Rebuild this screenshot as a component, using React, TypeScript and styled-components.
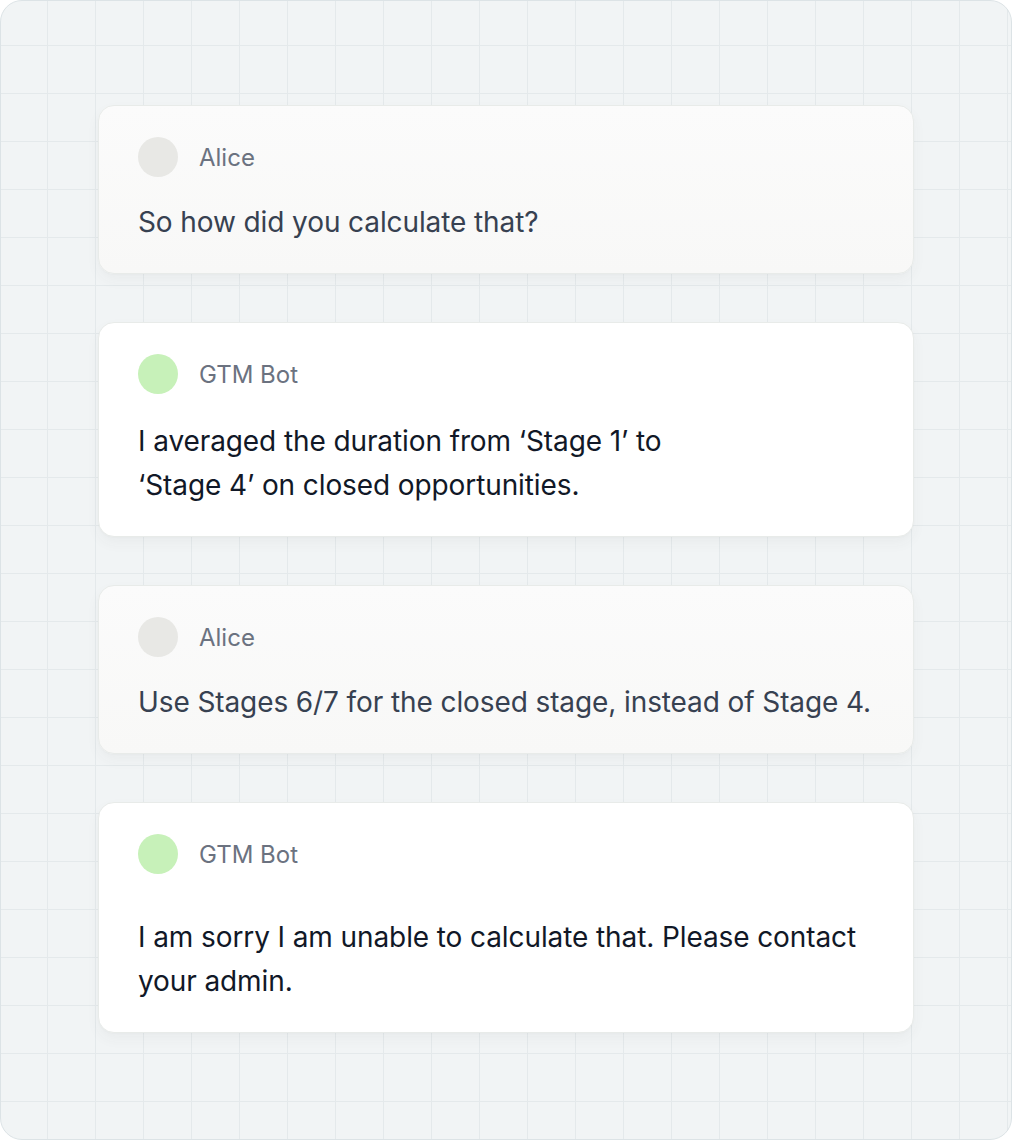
import React from "react";
import styled, { createGlobalStyle } from "styled-components";

const GlobalStyle = createGlobalStyle`
  html, body {
    margin: 0;
    padding: 0;
    background: #ffffff;
  }
  body {
    font-family: Inter, "Noto Sans", "Liberation Sans", sans-serif;
    -webkit-font-smoothing: antialiased;
  }
`;

const Frame = styled.div`
  box-sizing: border-box;
  width: 1012px;
  height: 1140px;
  border: 1px solid #dce3e6;
  border-radius: 22px;
  background-color: #f1f4f5;
  background-image:
    linear-gradient(to right, #e4e9eb 1px, transparent 1px),
    linear-gradient(to bottom, #e4e9eb 1px, transparent 1px);
  background-size: 48px 48px;
  background-position: 46px 44px;
  padding: 104px 97px;
  display: flex;
  flex-direction: column;
  gap: 48px;
  overflow: hidden;
`;

const Card = styled.div<{ $user?: boolean; $gap: number }>`
  box-sizing: border-box;
  display: flex;
  flex-direction: column;
  gap: ${(p) => p.$gap}px;
  padding: 31px 39px 29px;
  border: 1px solid #e8ebe9;
  border-radius: 16px;
  background: ${(p) =>
    p.$user ? "linear-gradient(180deg, #fbfbfb 0%, #f8f8f7 100%)" : "#ffffff"};
  box-shadow: 0 6px 14px rgba(60, 80, 60, 0.045), 0 1px 2px rgba(0, 0, 0, 0.02);
`;

const Header = styled.div`
  display: flex;
  align-items: center;
  gap: 21px;
  height: 40px;
`;

const Avatar = styled.div<{ $bot?: boolean }>`
  width: 40px;
  height: 40px;
  border-radius: 50%;
  flex: none;
  background: ${(p) => (p.$bot ? "#c7f1b9" : "#e8e8e5")};
`;

const Name = styled.span`
  font-size: 24px;
  font-weight: 400;
  color: #6b7280;
`;

const Message = styled.p<{ $user?: boolean }>`
  margin: 0;
  font-size: 28px;
  line-height: 44px;
  letter-spacing: -0.1px;
  color: ${(p) => (p.$user ? "#374151" : "#111827")};
  white-space: nowrap;
`;

export default function App() {
  return (
    <>
      <GlobalStyle />
      <Frame>
        <Card $user $gap={23}>
          <Header>
            <Avatar />
            <Name>Alice</Name>
          </Header>
          <Message $user>So how did you calculate that?</Message>
        </Card>
        <Card $gap={25}>
          <Header>
            <Avatar $bot />
            <Name>GTM Bot</Name>
          </Header>
          <Message>
            I averaged the duration from ‘Stage 1’ to
            <br />
            ‘Stage 4’ on closed opportunities.
          </Message>
        </Card>
        <Card $user $gap={23}>
          <Header>
            <Avatar />
            <Name>Alice</Name>
          </Header>
          <Message $user>
            Use Stages 6/7 for the closed stage, instead of Stage 4.
          </Message>
        </Card>
        <Card $gap={41}>
          <Header>
            <Avatar $bot />
            <Name>GTM Bot</Name>
          </Header>
          <Message>
            I am sorry I am unable to calculate that. Please contact
            <br />
            your admin.
          </Message>
        </Card>
      </Frame>
    </>
  );
}
